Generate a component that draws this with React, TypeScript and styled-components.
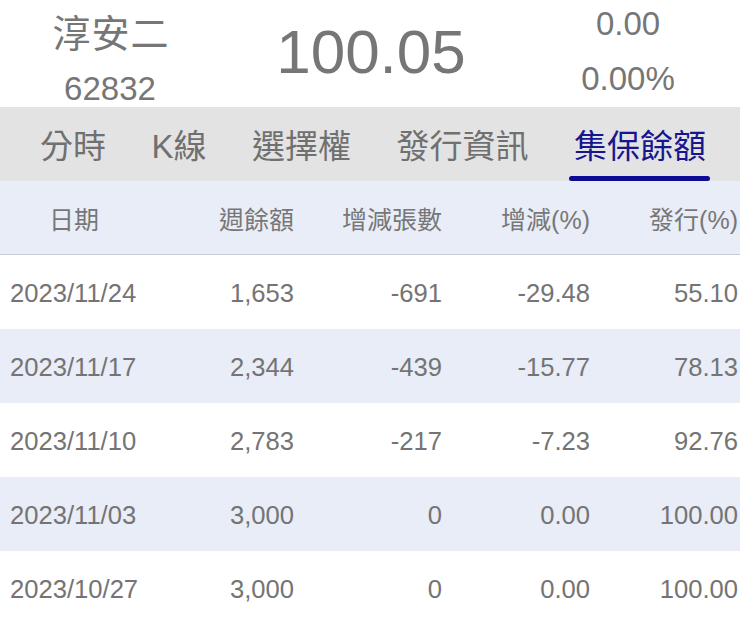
import React from "react";
import styled, { createGlobalStyle } from "styled-components";

const Global = createGlobalStyle`
  html, body { margin: 0; padding: 0; background: #ffffff; }
  body { font-family: "Liberation Sans", "Noto Sans CJK TC", sans-serif; }
`;

const Page = styled.div`
  width: 740px;
  background: #ffffff;
  color: #767676;
  overflow: hidden;
`;

const QuoteBar = styled.div`
  height: 107px;
  display: grid;
  grid-template-columns: 220px 300px 220px;
`;

const NameBlock = styled.div`
  display: flex;
  flex-direction: column;
  align-items: center;
  padding-top: 12px;
`;

const StockName = styled.div`
  font-size: 38px;
  line-height: 44px;
  letter-spacing: 1px;
  padding-left: 2px;
`;

const StockCode = styled.div`
  font-size: 33px;
  line-height: 36px;
  margin-top: 15px;
`;

const Price = styled.div`
  text-align: center;
  font-size: 62px;
  line-height: 64px;
  padding-top: 20px;
  padding-left: 2px;
`;

const ChangeBlock = styled.div`
  display: flex;
  flex-direction: column;
  align-items: center;
  padding-top: 5px;
  gap: 17px;
  padding-right: 4px;
`;

const ChangeValue = styled.div`
  font-size: 33px;
  line-height: 38px;
`;

const TabBar = styled.div`
  height: 74px;
  background: #e3e3e3;
  display: flex;
  align-items: stretch;
  padding-left: 40px;
  gap: 45.5px;
`;

const Tab = styled.div<{ $active?: boolean }>`
  position: relative;
  display: flex;
  align-items: center;
  font-size: 33px;
  color: ${(p) => (p.$active ? "#16168f" : "#707070")};
  &::after {
    content: "";
    display: ${(p) => (p.$active ? "block" : "none")};
    position: absolute;
    left: -5px;
    right: -4px;
    bottom: 0;
    height: 5px;
    border-radius: 3px;
    background: #0c0c92;
  }
`;

const Table = styled.div`
  display: grid;
  grid-template-columns: repeat(5, 148px);
`;

const HeaderRow = styled.div`
  display: contents;
`;

const HeadCell = styled.div<{ $align: "left" | "center" | "right" }>`
  height: 73px;
  background: #e8edf7;
  border-bottom: 1px solid #c9ccd4;
  display: flex;
  align-items: center;
  justify-content: ${(p) =>
    p.$align === "center" ? "center" : p.$align === "left" ? "flex-start" : "flex-end"};
  padding-right: ${(p) => (p.$align === "right" ? "2px" : "0")};
  font-size: 25px;
  color: #777777;
  white-space: nowrap;
`;

const Cell = styled.div<{ $striped: boolean; $first?: boolean }>`
  height: 74px;
  background: ${(p) => (p.$striped ? "#e8edf7" : "#ffffff")};
  display: flex;
  align-items: center;
  justify-content: ${(p) => (p.$first ? "flex-start" : "flex-end")};
  padding-left: ${(p) => (p.$first ? "10px" : "0")};
  padding-right: ${(p) => (p.$first ? "0" : "2px")};
  padding-top: 3px;
  box-sizing: border-box;
  font-size: 25.6px;
  color: #747474;
  white-space: nowrap;
`;

const tabs = ["分時", "K線", "選擇權", "發行資訊", "集保餘額"];
const headers = ["日期", "週餘額", "增減張數", "增減(%)", "發行(%)"];
const rows = [
  ["2023/11/24", "1,653", "-691", "-29.48", "55.10"],
  ["2023/11/17", "2,344", "-439", "-15.77", "78.13"],
  ["2023/11/10", "2,783", "-217", "-7.23", "92.76"],
  ["2023/11/03", "3,000", "0", "0.00", "100.00"],
  ["2023/10/27", "3,000", "0", "0.00", "100.00"],
];

export default function App() {
  return (
    <Page>
      <Global />
      <QuoteBar>
        <NameBlock>
          <StockName>淳安二</StockName>
          <StockCode>62832</StockCode>
        </NameBlock>
        <Price>100.05</Price>
        <ChangeBlock>
          <ChangeValue>0.00</ChangeValue>
          <ChangeValue>0.00%</ChangeValue>
        </ChangeBlock>
      </QuoteBar>
      <TabBar>
        {tabs.map((t) => (
          <Tab key={t} $active={t === "集保餘額"}>
            {t}
          </Tab>
        ))}
      </TabBar>
      <Table>
        <HeaderRow>
          {headers.map((h, i) => (
            <HeadCell key={h} $align={i === 0 ? "center" : "right"}>
              {h}
            </HeadCell>
          ))}
        </HeaderRow>
        {rows.map((r, ri) =>
          r.map((c, ci) => (
            <Cell key={`${ri}-${ci}`} $striped={ri % 2 === 1} $first={ci === 0}>
              {c}
            </Cell>
          ))
        )}
      </Table>
    </Page>
  );
}
